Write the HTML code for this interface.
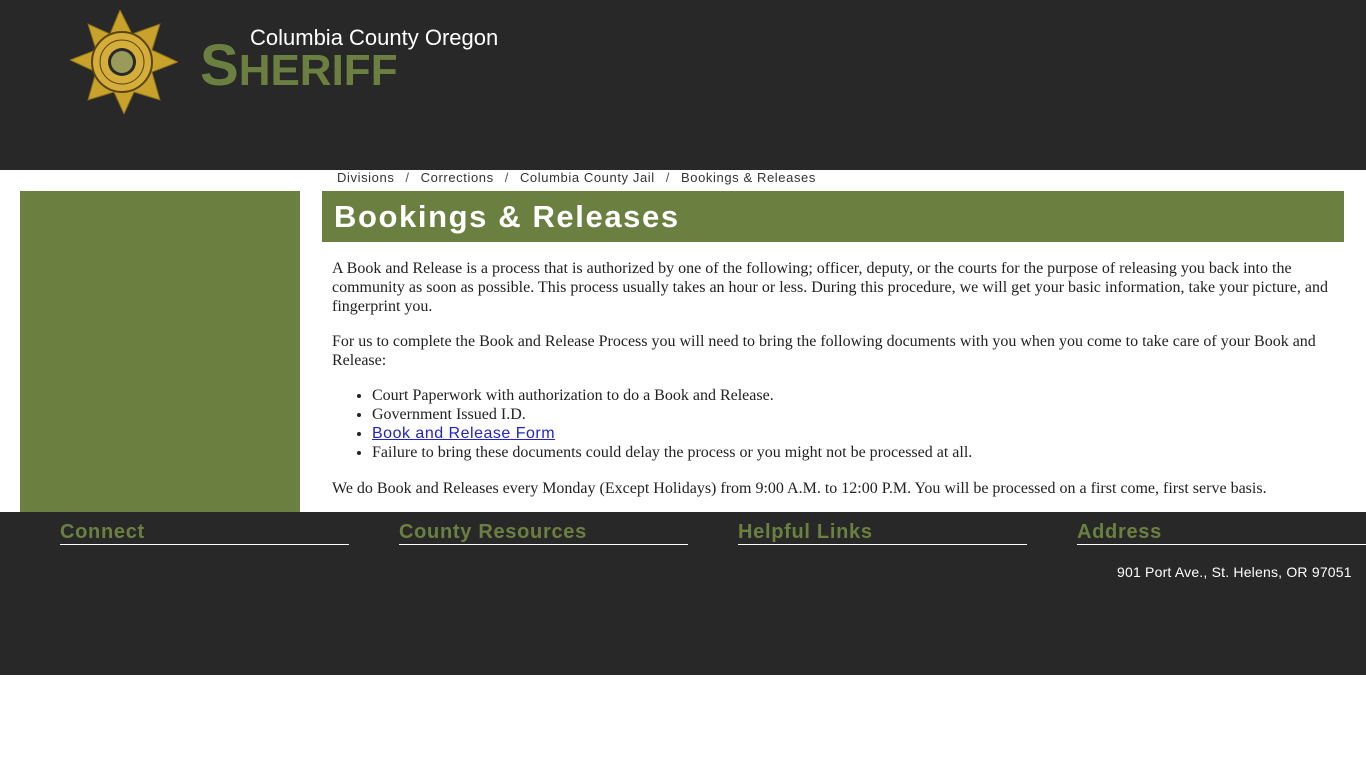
<!DOCTYPE html>
<html><head><meta charset="utf-8"><style>
body{margin:0;width:1366px;height:768px;background:#fff;font-family:"Liberation Serif",serif;position:relative;overflow:hidden}
.hdr{position:absolute;left:0;top:0;width:1366px;height:170px;background:#282828}
.sub{position:absolute;left:250px;top:25px;color:#fff;font:22px "Liberation Sans",sans-serif}
.big{position:absolute;left:200px;top:32px;color:#6b8040;font:bold 44px "Liberation Sans",sans-serif}
.big span{font-size:58px}
.bc{position:absolute;left:337px;top:170px;font:13px "Liberation Sans",sans-serif;color:#333;letter-spacing:0.6px}
.bc i{font-style:normal;margin:0 11px;color:#555}
.side{position:absolute;left:20px;top:191px;width:280px;height:321px;background:#6b8040}
.title{position:absolute;left:322px;top:191px;width:1022px;height:51px;background:#6b8040;color:#fff;font:bold 31px "Liberation Sans",sans-serif;line-height:51px;padding-left:12px;box-sizing:border-box;letter-spacing:1.6px}
.c{position:absolute;left:332px;top:259px;width:1005px;font-size:16px;line-height:19px;color:#222}
.c p{margin:0 0 16px}
.c ul{margin:0 0 17px;padding-left:40px}
.c a{color:#2222cc;font:16px "Liberation Sans",sans-serif;letter-spacing:0.5px}
.ft{position:absolute;left:0;top:512px;width:1366px;height:163px;background:#282828}
.fh{position:absolute;top:8px;width:289px;color:#6b8040;font:bold 20px "Liberation Sans",sans-serif;border-bottom:1px solid #fff;line-height:24px;letter-spacing:0.7px}
.addr{position:absolute;left:1117px;top:52px;color:#fff;font:14px "Liberation Sans",sans-serif;letter-spacing:0.2px}
</style></head><body>
<div class="hdr">
<svg style="position:absolute;left:70px;top:10px" width="108" height="104" viewBox="0 0 108 104">
<polygon points="50,0 62,24 90,14 82,40 108,52 82,62 90,90 64,82 54,104 44,82 18,90 26,62 0,50 26,40 18,14 40,24" fill="#c9a22c" stroke="#8a6d1a"/>
<circle cx="52" cy="52" r="30" fill="#d4ad3a" stroke="#5a4510" stroke-width="2"/>
<circle cx="52" cy="52" r="22" fill="none" stroke="#5a4510" stroke-width="1"/>
<circle cx="52" cy="52" r="14" fill="#2a2a2a"/><circle cx="52" cy="52" r="11" fill="#9a9a5a"/>
</svg>
<div class="sub">Columbia County Oregon</div>
<div class="big"><span>S</span>HERIFF</div>
</div>
<div class="bc">Divisions<i>/</i>Corrections<i>/</i>Columbia County Jail<i>/</i>Bookings &amp; Releases</div>
<div class="side"></div>
<div class="title">Bookings &amp; Releases</div>
<div class="c">
<p>A Book and Release is a process that is authorized by one of the following; officer, deputy, or the courts for the purpose of releasing you back into the community as soon as possible. This process usually takes an hour or less. During this procedure, we will get your basic information, take your picture, and fingerprint you.</p>
<p>For us to complete the Book and Release Process you will need to bring the following documents with you when you come to take care of your Book and Release:</p>
<ul><li>Court Paperwork with authorization to do a Book and Release.</li><li>Government Issued I.D.</li><li><a href="#">Book and Release Form</a></li><li>Failure to bring these documents could delay the process or you might not be processed at all.</li></ul>
<p>We do Book and Releases every Monday (Except Holidays) from 9:00 A.M. to 12:00 P.M. You will be processed on a first come, first serve basis.</p>
</div>
<div class="ft">
<div class="fh" style="left:60px">Connect</div>
<div class="fh" style="left:399px">County Resources</div>
<div class="fh" style="left:738px">Helpful Links</div>
<div class="fh" style="left:1077px">Address</div>
<div class="addr">901 Port Ave., St. Helens, OR 97051</div>
</div>
</body></html>
